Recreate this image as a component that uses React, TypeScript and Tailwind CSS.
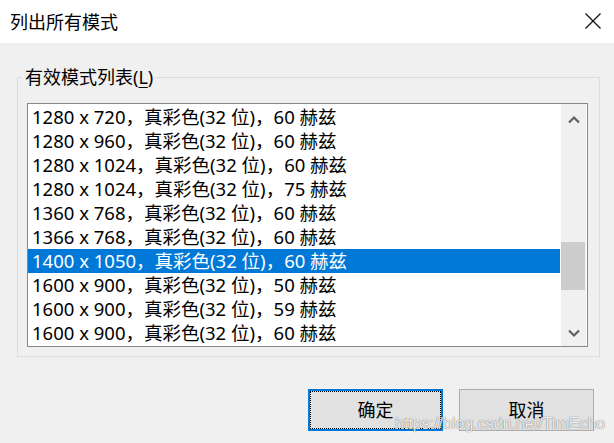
import React from "react";

const rows = [
  "1280 x 720，真彩色(32 位)，60 赫兹",
  "1280 x 960，真彩色(32 位)，60 赫兹",
  "1280 x 1024，真彩色(32 位)，60 赫兹",
  "1280 x 1024，真彩色(32 位)，75 赫兹",
  "1360 x 768，真彩色(32 位)，60 赫兹",
  "1366 x 768，真彩色(32 位)，60 赫兹",
  "1400 x 1050，真彩色(32 位)，60 赫兹",
  "1600 x 900，真彩色(32 位)，50 赫兹",
  "1600 x 900，真彩色(32 位)，59 赫兹",
  "1600 x 900，真彩色(32 位)，60 赫兹",
];

export default function App() {
  return (
    <div className="relative w-[614px] h-[443px] bg-[#f0f0f0] flex flex-col overflow-hidden text-black font-['Noto_Sans','Noto_Sans_CJK_SC',sans-serif] text-[18px]">
      {/* Title bar */}
      <div className="h-[43px] bg-white flex items-center justify-between pl-[10px] pr-[13px] shrink-0">
        <span className="leading-[24px]">列出所有模式</span>
        <svg width="16" height="16" viewBox="0 0 16 16" className="mt-[-1px]">
          <line x1="0.5" y1="0.5" x2="15.5" y2="15.5" stroke="#111" strokeWidth="1.2" />
          <line x1="15.5" y1="0.5" x2="0.5" y2="15.5" stroke="#111" strokeWidth="1.2" />
        </svg>
      </div>

      {/* Group box */}
      <div className="relative ml-[17px] mt-[34px] w-[583px] h-[280px] border border-[#dcdcdc] pt-[25px] pl-[9px] shrink-0">
        <span className="absolute left-[4px] top-[-13px] bg-[#f0f0f0] px-[3px] leading-[24px]">
          有效模式列表(<span className="underline underline-offset-[3px] decoration-1">L</span>)
        </span>

        {/* List box */}
        <div className="w-[561px] h-[244px] border border-[#828790] bg-white flex">
          <div className="w-[532px] pt-[1px] flex flex-col text-[18.5px]">
            {rows.map((r, i) => (
              <div
                key={i}
                className={
                  i === 6
                    ? "h-[24px] leading-[24px] pl-[4px] whitespace-nowrap bg-[#0078d7] text-white"
                    : "h-[24px] leading-[24px] pl-[4px] whitespace-nowrap"
                }
              >
                {r}
              </div>
            ))}
          </div>
          <div className="ml-[1px] w-[25px] h-full bg-[#f0f0f0] flex flex-col">
            <div className="h-[31px] flex items-center justify-center">
              <svg width="12" height="9" viewBox="0 0 12 9">
                <polyline points="1,7.5 6,2.5 11,7.5" fill="none" stroke="#606060" strokeWidth="2.2" />
              </svg>
            </div>
            <div className="flex-1">
              <div className="mt-[107px] w-[24px] h-[48px] bg-[#cdcdcd]" />
            </div>
            <div className="h-[26px] flex items-center justify-center">
              <svg width="12" height="9" viewBox="0 0 12 9">
                <polyline points="1,1.5 6,6.5 11,1.5" fill="none" stroke="#606060" strokeWidth="2.2" />
              </svg>
            </div>
          </div>
        </div>
      </div>

      {/* Buttons */}
      <div className="mt-[32px] flex justify-end gap-[16px] pr-[20px] shrink-0">
        <div className="w-[135px] h-[42px] border-2 border-[#0078d7] bg-[#e1e1e1]">
          <div className="w-full h-full border border-dotted border-black flex items-center justify-center leading-[24px]">
            确定
          </div>
        </div>
        <div className="w-[135px] h-[42px] border border-[#adadad] bg-[#e1e1e1] flex items-center justify-center leading-[24px]">
          取消
        </div>
      </div>

      {/* Watermark */}
      <span className="absolute left-[395px] top-[416px] text-[16px] leading-[16px] font-['Liberation_Sans',Arial,sans-serif] text-white/90 [text-shadow:0_0_1px_rgba(0,0,0,0.75)] whitespace-nowrap">
        https://blog.csdn.net/TimEcho
      </span>
    </div>
  );
}
